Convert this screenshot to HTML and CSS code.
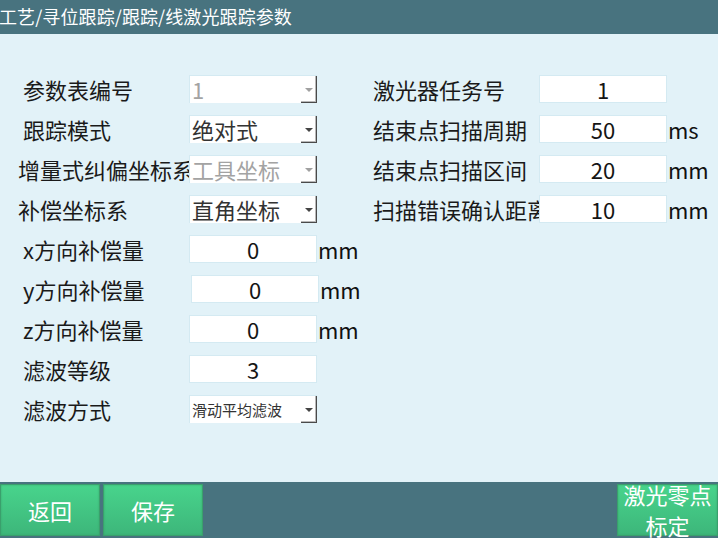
FILE: index.html
```html
<!DOCTYPE html>
<html lang="zh-CN">
<head>
<meta charset="utf-8">
<title>线激光跟踪参数</title>
<link rel="stylesheet" href="styles.css">
</head>
<body>
<div class="screen">
  <div class="header">工艺/寻位跟踪/跟踪/线激光跟踪参数</div>
  <div class="main">
    <div class="col col-left">
      <div class="row">
        <div class="label">参数表编号</div>
        <div class="combo disabled"><span class="combo-text">1</span><span class="combo-btn"><i class="arrow"></i></span></div>
      </div>
      <div class="row">
        <div class="label">跟踪模式</div>
        <div class="combo"><span class="combo-text">绝对式</span><span class="combo-btn"><i class="arrow"></i></span></div>
      </div>
      <div class="row">
        <div class="label label-s">增量式纠偏坐标系</div>
        <div class="combo disabled"><span class="combo-text">工具坐标</span><span class="combo-btn"><i class="arrow"></i></span></div>
      </div>
      <div class="row">
        <div class="label label-s">补偿坐标系</div>
        <div class="combo"><span class="combo-text">直角坐标</span><span class="combo-btn"><i class="arrow"></i></span></div>
      </div>
      <div class="row">
        <div class="label">x方向补偿量</div>
        <div class="field">0</div>
        <div class="unit">mm</div>
      </div>
      <div class="row">
        <div class="label">y方向补偿量</div>
        <div class="field field-shift">0</div>
        <div class="unit">mm</div>
      </div>
      <div class="row">
        <div class="label">z方向补偿量</div>
        <div class="field">0</div>
        <div class="unit">mm</div>
      </div>
      <div class="row">
        <div class="label">滤波等级</div>
        <div class="field">3</div>
      </div>
      <div class="row">
        <div class="label">滤波方式</div>
        <div class="combo"><span class="combo-text combo-small">滑动平均滤波</span><span class="combo-btn"><i class="arrow"></i></span></div>
      </div>
    </div>
    <div class="col col-right">
      <div class="row">
        <div class="label label-r">激光器任务号</div>
        <div class="field">1</div>
      </div>
      <div class="row">
        <div class="label label-r">结束点扫描周期</div>
        <div class="field">50</div>
        <div class="unit">ms</div>
      </div>
      <div class="row">
        <div class="label label-r">结束点扫描区间</div>
        <div class="field">20</div>
        <div class="unit">mm</div>
      </div>
      <div class="row">
        <div class="label label-r">扫描错误确认距离</div>
        <div class="field">10</div>
        <div class="unit">mm</div>
      </div>
    </div>
  </div>
  <div class="footer">
    <div class="btn">返回</div>
    <div class="btn">保存</div>
    <div class="btn btn-right">激光零点标定</div>
  </div>
</div>
</body>
</html>
```
FILE: styles.css
```css
html, body {
  margin: 0;
  padding: 0;
}
body {
  width: 718px;
  height: 538px;
  overflow: hidden;
  font-family: "Noto Sans CJK SC", "Noto Sans", sans-serif;
  color: #1a1a1a;
}
.screen {
  width: 718px;
  height: 538px;
  display: flex;
  flex-direction: column;
  overflow: hidden;
}
.header {
  height: 34px;
  flex: none;
  background: #48737f;
  color: #ffffff;
  font-size: 18px;
  line-height: 32px;
  white-space: nowrap;
  margin-left: -1px;
  letter-spacing: 0.1px;
}
.main {
  height: 448px;
  flex: none;
  box-sizing: border-box;
  padding-top: 41px;
  background: #e2f2f8;
  display: flex;
}
.col-left {
  width: 373px;
  flex: none;
}
.col-right {
  flex: 1;
}
.row {
  display: flex;
  align-items: center;
  height: 28px;
  margin-bottom: 12px;
}
.label {
  width: 166px;
  padding-left: 23px;
  flex: none;
  white-space: nowrap;
  font-size: 22px;
  line-height: 28px;
  height: 28px;
}
.label-s {
  width: 171px;
  padding-left: 18px;
}
.label-r {
  width: 166px;
  padding-left: 0;
}
.field {
  position: relative;
  z-index: 1;
  width: 128px;
  height: 28px;
  box-sizing: border-box;
  flex: none;
  background: #ffffff;
  border: 1px solid #d4eaf2;
  text-align: center;
  font-size: 22px;
  line-height: 26px;
  color: #151515;
}
.field-shift {
  margin-left: 2px;
}
.unit {
  margin-left: 1px;
  font-size: 22px;
  line-height: 28px;
  color: #111111;
}
.combo {
  position: relative;
  z-index: 1;
  width: 128px;
  height: 28px;
  box-sizing: border-box;
  flex: none;
  display: flex;
  background: #ffffff;
  border-top: 1px solid #d4eaf2;
  border-left: 1px solid #d4eaf2;
}
.combo-text {
  flex: 1;
  padding-left: 2px;
  font-size: 22px;
  line-height: 26px;
  color: #333333;
  white-space: nowrap;
}
.combo-small {
  font-size: 15px;
  line-height: 27px;
}
.disabled .combo-text {
  color: #a3a3a3;
}
.combo-btn {
  width: 16px;
  flex: none;
  box-sizing: border-box;
  border-right: 1px solid #4a4a4a;
  border-bottom: 1px solid #4a4a4a;
  box-shadow: inset -1px -1px 0 #b8b8b8;
  display: flex;
  align-items: center;
  justify-content: center;
}
.arrow {
  display: block;
  width: 0;
  height: 0;
  border-left: 4px solid transparent;
  border-right: 4px solid transparent;
  border-top: 4px solid #444444;
  margin-top: 1px;
}
.disabled .arrow {
  border-top-color: #a0a0a0;
}
.footer {
  height: 56px;
  flex: none;
  box-sizing: border-box;
  padding: 2px 0;
  background: #48737f;
  display: flex;
  gap: 3px;
}
.btn {
  width: 100px;
  height: 52px;
  box-sizing: border-box;
  flex: none;
  background: linear-gradient(#48d48c, #3db67a);
  border: 1px solid #3a9f6c;
  box-shadow: inset 0 0 2px #38a26b;
  color: #ffffff;
  font-size: 22px;
  line-height: 31px;
  display: flex;
  align-items: center;
  justify-content: center;
  text-align: center;
}
.btn-right {
  width: 101px;
  margin-left: auto;
}
```
